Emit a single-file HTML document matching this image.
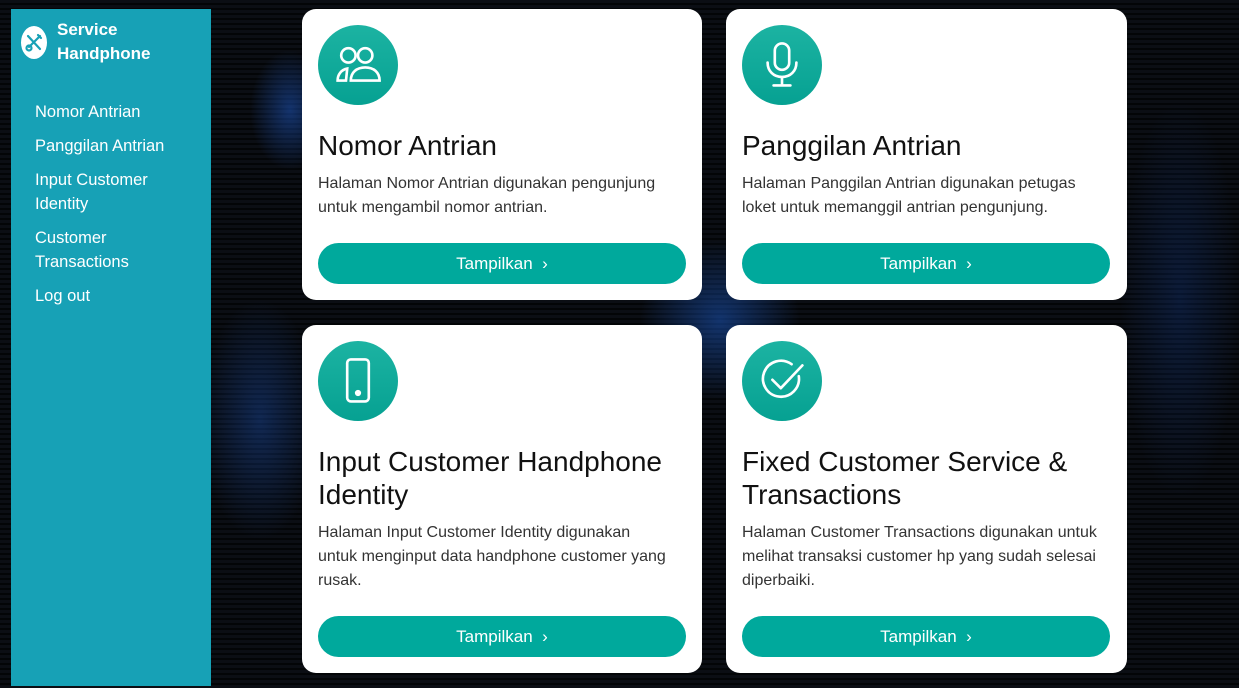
<!DOCTYPE html>
<html><head><style>
*{margin:0;padding:0;box-sizing:border-box}
body{width:1239px;height:688px;overflow:hidden;font-family:"Liberation Sans",sans-serif;background:#05080d;position:relative}
.bg{position:absolute;inset:0;background:
radial-gradient(ellipse 40px 60px at 290px 110px,rgba(30,90,200,.5),transparent),
radial-gradient(ellipse 60px 120px at 260px 420px,rgba(30,90,200,.35),transparent),
radial-gradient(ellipse 80px 80px at 720px 320px,rgba(30,100,220,.45),transparent),
radial-gradient(ellipse 60px 200px at 1180px 300px,rgba(20,70,170,.25),transparent),
repeating-linear-gradient(0deg,#0b0e14 0 3px,#030507 3px 5px)}
.side{position:absolute;left:11px;top:9px;width:200px;height:677px;background:#17a1b6;color:#fff}
.logo{position:absolute;left:10px;top:17px;width:26px;height:33px;border-radius:50%;background:#fff}
.brand{position:absolute;left:46px;top:9px;font-weight:bold;font-size:17px;line-height:24px}
.nav{position:absolute;left:24px;top:91px;font-size:16.5px;line-height:24px}
.nav div{margin-bottom:10px}
.card{position:absolute;background:#fff;border-radius:14px;width:400px}
.ic{position:absolute;left:16px;top:16px;width:80px;height:80px;border-radius:50%;background:linear-gradient(#1cb3a2,#06a192)}
.ic svg{position:absolute;left:16px;top:16px}
.card h2{position:absolute;left:16px;top:120px;font-weight:normal;font-size:28px;line-height:33px;color:#111;width:375px}
.card p{position:absolute;left:16px;font-size:16px;line-height:24px;color:#333;width:375px;white-space:nowrap}
.btn{position:absolute;left:16px;width:368px;height:41px;border-radius:21px;background:#00a99c;color:#fff;font-size:17px;text-align:center;line-height:41px}
</style></head><body>
<div class="bg"></div>
<div class="side">
<div class="logo"><svg width="26" height="33" viewBox="0 0 26 33"><g stroke="#17a1b6" stroke-width="2.2" fill="none" stroke-linecap="round"><path d="M7 10 L19 23"/><path d="M19 10 L8 21"/><circle cx="8" cy="22" r="2.5"/><path d="M17 9 l3 3"/></g></svg></div>
<div class="brand">Service<br>Handphone</div>
<div class="nav"><div>Nomor Antrian</div><div>Panggilan Antrian</div><div>Input Customer<br>Identity</div><div>Customer<br>Transactions</div><div>Log out</div></div>
</div>

<div class="card" style="left:302px;top:9px;height:291px">
<div class="ic"><svg width="48" height="48" viewBox="0 0 40 40" fill="none" stroke="#fff" stroke-width="2.2"><circle cx="12" cy="12" r="6"/><circle cx="26" cy="12" r="6"/><path d="M3 33c0-5 3-9 8-10l-1 10z"/><path d="M14 33c0-7 5-11 12-11s12 4 12 11z"/></svg></div>
<h2>Nomor Antrian</h2>
<p style="top:163px">Halaman Nomor Antrian digunakan pengunjung<br>untuk mengambil nomor antrian.</p>
<div class="btn" style="top:234px">Tampilkan &nbsp;›</div></div>

<div class="card" style="left:726px;top:9px;height:291px;width:401px">
<div class="ic"><svg width="48" height="48" viewBox="0 0 40 40" fill="none" stroke="#fff" stroke-width="2.2" stroke-linecap="round"><rect x="14" y="2" width="12" height="22" rx="6"/><path d="M8 18c0 7 5 12 12 12s12-5 12-12M20 30v7M13 37h14"/></svg></div>
<h2>Panggilan Antrian</h2>
<p style="top:163px">Halaman Panggilan Antrian digunakan petugas<br>loket untuk memanggil antrian pengunjung.</p>
<div class="btn" style="top:234px">Tampilkan &nbsp;›</div></div>

<div class="card" style="left:302px;top:325px;height:348px">
<div class="ic"><svg width="48" height="48" viewBox="0 0 40 40" fill="none" stroke="#fff" stroke-width="2.2"><rect x="11" y="2" width="18" height="35" rx="3"/><circle cx="20" cy="30" r="1.5" fill="#fff"/></svg></div>
<h2>Input Customer Handphone Identity</h2>
<p style="top:196px">Halaman Input Customer Identity digunakan<br>untuk menginput data handphone customer yang<br>rusak.</p>
<div class="btn" style="top:291px">Tampilkan &nbsp;›</div></div>

<div class="card" style="left:726px;top:325px;height:348px;width:401px">
<div class="ic"><svg width="48" height="48" viewBox="0 0 40 40" fill="none" stroke="#fff" stroke-width="2.2" stroke-linecap="round" stroke-linejoin="round"><path d="M34 16a15 15 0 1 1-6-10"/><path d="M12 19l7 7L37 7"/></svg></div>
<h2>Fixed Customer Service &amp; Transactions</h2>
<p style="top:196px">Halaman Customer Transactions digunakan untuk<br>melihat transaksi customer hp yang sudah selesai<br>diperbaiki.</p>
<div class="btn" style="top:291px">Tampilkan &nbsp;›</div></div>
</body></html>
